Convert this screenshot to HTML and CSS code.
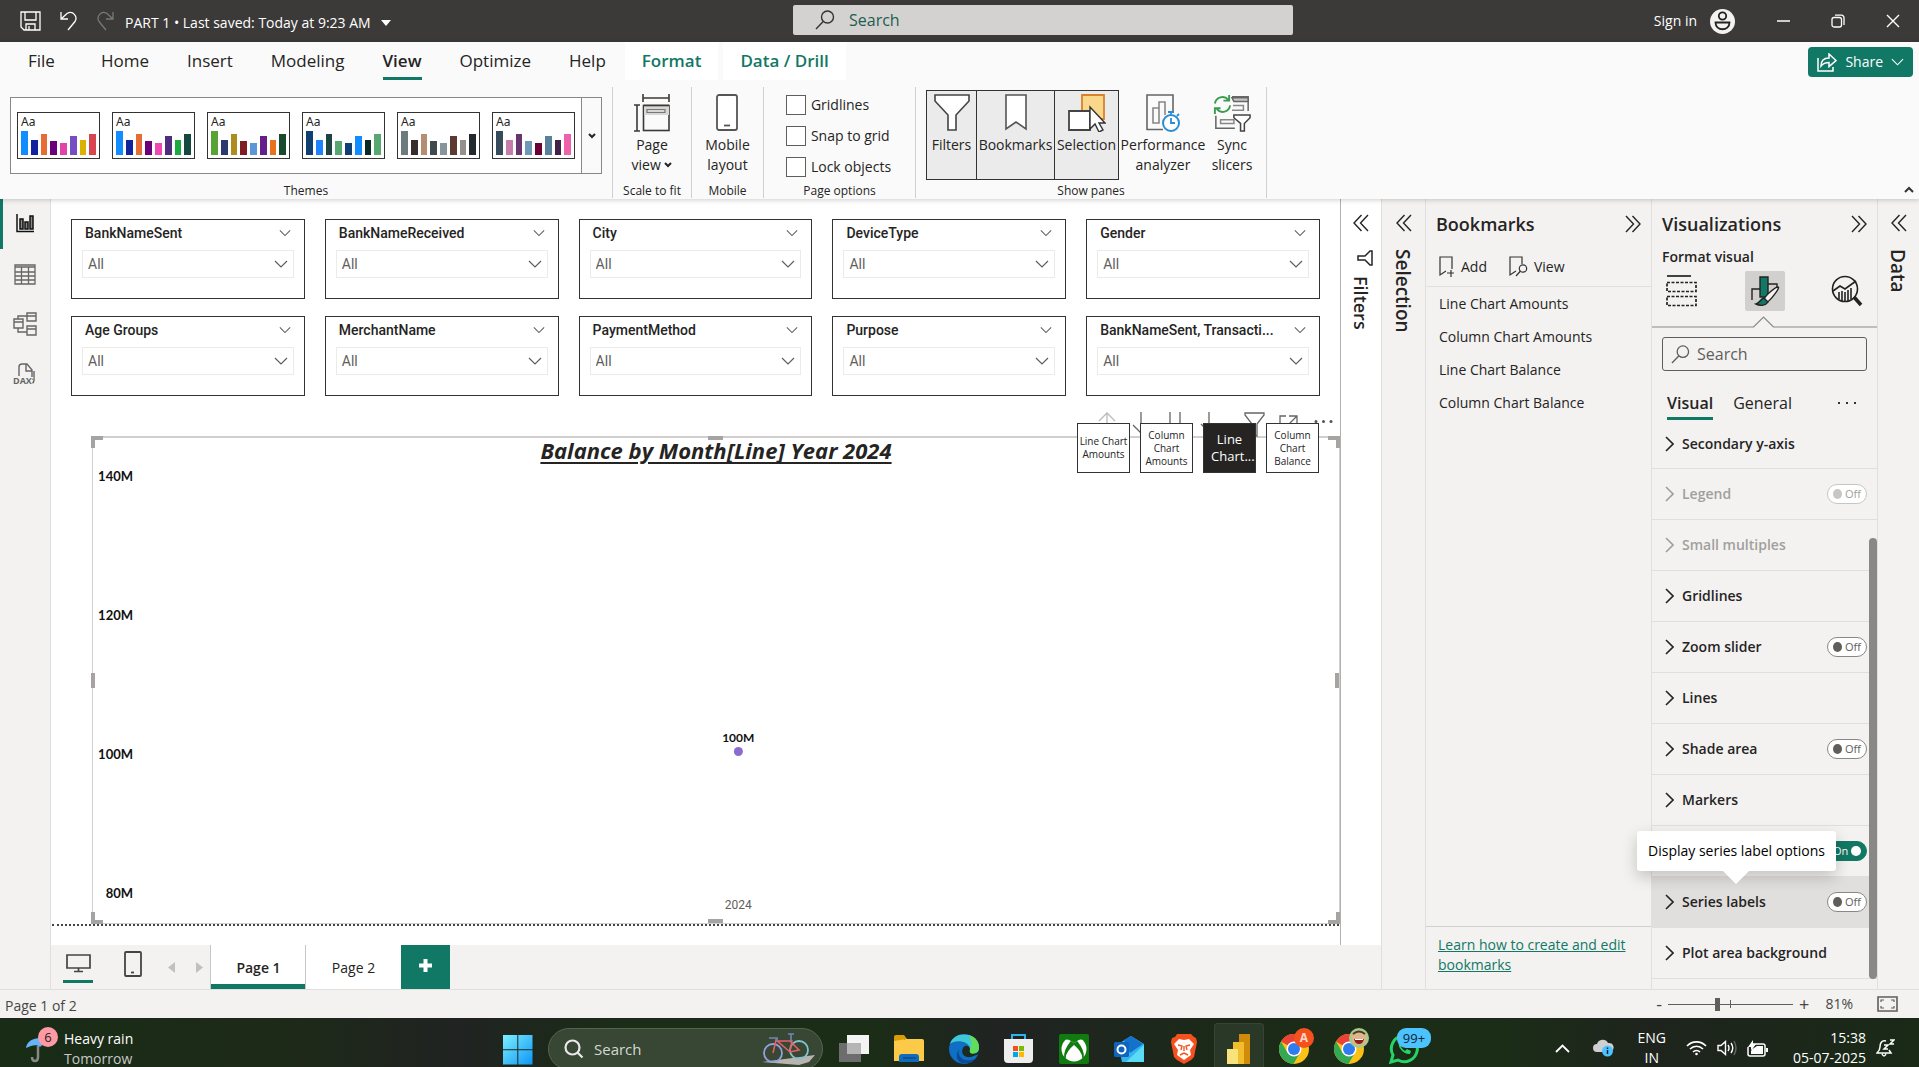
FILE: index.html
```html
<!DOCTYPE html>
<html lang="en">
<head>
<meta charset="utf-8">
<title>PART 1 - Power BI Desktop</title>
<link rel="stylesheet" href="styles.css">
</head>
<body>
<svg class="defs" width="0" height="0" aria-hidden="true">
  <symbol id="chev-down" viewBox="0 0 14 8"><path d="M1 1l6 6 6-6" fill="none" stroke="currentColor" stroke-width="1.2"/></symbol>
  <symbol id="chev-bold" viewBox="0 0 8 6"><path d="M1 1l3 3 3-3" fill="none" stroke="currentColor" stroke-width="2"/></symbol>
  <symbol id="chev-right" viewBox="0 0 9 16"><path d="M1 1l7 7-7 7" fill="none" stroke="currentColor" stroke-width="1.6"/></symbol>
  <symbol id="dbl-left" viewBox="0 0 16 18"><path d="M8.500 1L1 9l7.500 8M15 1L7.500 9l7.500 8" fill="none" stroke="currentColor" stroke-width="1.400"/></symbol>
  <symbol id="dbl-right" viewBox="0 0 16 18"><path d="M1 1l7.500 8L1 17M7.500 1L15 9l-7.500 8" fill="none" stroke="currentColor" stroke-width="1.400"/></symbol>
  <symbol id="lens" viewBox="0 0 20 20"><circle cx="12.500" cy="7" r="6" fill="none" stroke="currentColor" stroke-width="1.400"/><path d="M8.200 11.500L1 19" stroke="currentColor" stroke-width="1.400"/></symbol>
  <symbol id="chrome" viewBox="0 0 30 30"><circle cx="15" cy="15" r="15" fill="#fbc116"/><path d="M15 15L2 7.500A15 15 0 0 1 28 7.500H15z" fill="#ea4335"/><path d="M2 7.500A15 15 0 0 0 14.500 30L21 18.500 8.500 18.800z" fill="#34a853"/><circle cx="15" cy="15" r="7.500" fill="#fff"/><circle cx="15" cy="15" r="6" fill="#2f7bf0"/></symbol>
</svg>

<header class="titlebar">
  <div class="quick">
    <button class="icon-btn" aria-label="Save"><svg width="21" height="20" viewBox="0 0 21 20" fill="none" stroke="#fff" stroke-width="1.300"><path d="M1 1h19v18H4l-3-3zM5 1v8h11V1M6 19v-6h9v6M9 15v4"/></svg></button>
    <button class="icon-btn" aria-label="Undo"><svg width="19" height="20" viewBox="0 0 19 20" fill="none" stroke="#fff" stroke-width="1.300"><path d="M2 1v7h7M2 8l6-5.500c6-3.500 11 3 8 8L9 19"/></svg></button>
    <button class="icon-btn" aria-label="Redo"><svg width="19" height="20" viewBox="0 0 19 20" fill="none" stroke="#7a7876" stroke-width="1.300"><path d="M17 1v7h-7M17 8l-6-5.500c-6-3.500-11 3-8 8l7 8.500"/></svg></button>
    <button class="doc-name">PART 1 • Last saved: Today at 9:23 AM <span class="tri"></span></button>
  </div>
  <label class="top-search"><svg width="20" height="20"><use href="#lens"/></svg><input type="text" placeholder="Search" aria-label="Search"></label>
  <div class="window">
    <button class="sign">Sign in
      <svg width="25" height="25" viewBox="0 0 25 25"><circle cx="12.500" cy="12.500" r="12.500" fill="#f3f2f1"/><circle cx="12.500" cy="7" r="3.700" fill="none" stroke="#222" stroke-width="1.800"/><path d="M5.500 13.500h14c0 9-14 9-14 0z" fill="none" stroke="#222" stroke-width="1.800"/></svg></button>
    <button class="icon-btn" aria-label="Minimize"><svg width="14" height="14"><path d="M1 7h13" stroke="#fff" stroke-width="1.500"/></svg></button>
    <button class="icon-btn" aria-label="Restore"><svg width="14" height="14" fill="none" stroke="#fff" stroke-width="1.300"><rect x="1" y="3.500" width="9.500" height="9.500" rx="2"/><path d="M4 1.200h6.500a2.500 2.500 0 0 1 2.500 2.500V11"/></svg></button>
    <button class="icon-btn" aria-label="Close"><svg width="14" height="14" stroke="#fff" stroke-width="1.400"><path d="M1 1l12 12M13 1L1 13"/></svg></button>
  </div>
</header>

<section class="ribbon">
  <nav class="tabs">
    <a href="#file">File</a><a href="#home">Home</a><a href="#insert">Insert</a><a href="#modeling">Modeling</a><a href="#view" class="on">View</a><a href="#optimize">Optimize</a><a href="#help">Help</a>
    <a href="#format" class="ctx">Format</a><a href="#data" class="ctx">Data / Drill</a>
    <button class="share"><svg width="20" height="19" viewBox="0 0 20 19" fill="none" stroke="#fff" stroke-width="1.500"><path d="M1 5v13h15v-4M4 13c0-6 4-8 8-8V1l7 6.500-7 6v-4c-4 0-6 1-8 3.500z"/></svg>Share<svg width="13" height="8"><use href="#chev-down"/></svg></button>
  </nav>
  <div class="groups">
    <div class="group g-themes">
      <div class="gallery">
        <button class="theme"><b>Aa</b><span class="bars"><i style="background:#118dff"></i><i style="background:#12239e"></i><i style="background:#e66c37"></i><i style="background:#6b007b"></i><i style="background:#e044a7"></i><i style="background:#744ec2"></i><i style="background:#d9b300"></i><i style="background:#d64550"></i></span></button>
        <button class="theme"><b>Aa</b><span class="bars"><i style="background:#118dff"></i><i style="background:#12239e"></i><i style="background:#e66c37"></i><i style="background:#6b007b"></i><i style="background:#f047b3"></i><i style="background:#4e2d7c"></i><i style="background:#1aab40"></i><i style="background:#15483f"></i></span></button>
        <button class="theme"><b>Aa</b><span class="bars"><i style="background:#57a335"></i><i style="background:#2b3a6d"></i><i style="background:#ad8d1e"></i><i style="background:#7f1d24"></i><i style="background:#5b97d5"></i><i style="background:#63208a"></i><i style="background:#e8731c"></i><i style="background:#184a2c"></i></span></button>
        <button class="theme"><b>Aa</b><span class="bars"><i style="background:#103f73"></i><i style="background:#1f83ff"></i><i style="background:#1c4440"></i><i style="background:#57a773"></i><i style="background:#103f73"></i><i style="background:#118dff"></i><i style="background:#0a2a26"></i><i style="background:#57a773"></i></span></button>
        <button class="theme"><b>Aa</b><span class="bars"><i style="background:#6b7b7e"></i><i style="background:#372c2c"></i><i style="background:#b48d73"></i><i style="background:#3f4a4d"></i><i style="background:#84959b"></i><i style="background:#5c3a32"></i><i style="background:#96908c"></i><i style="background:#24292c"></i></span></button>
        <button class="theme"><b>Aa</b><span class="bars"><i style="background:#364b5c"></i><i style="background:#c67da9"></i><i style="background:#68356e"></i><i style="background:#7099b8"></i><i style="background:#6b0033"></i><i style="background:#58809b"></i><i style="background:#41204a"></i><i style="background:#ed62ab"></i></span></button>
        <button class="more" aria-label="More themes"><svg width="8" height="6"><use href="#chev-bold"/></svg></button>
      </div>
      <p>Themes</p>
    </div>
    <div class="group g-scale">
      <button class="big"><svg width="36" height="38" viewBox="0 0 36 38" fill="none" stroke="#3b3a39" stroke-width="1.600"><path d="M9 4h26M9 0v8M35 0v8M3 11v26M0 11h6M0 37h6"/><rect x="9.500" y="11.500" width="25.500" height="25"/><path d="M10 12h25v9H10z" fill="#d8d7d6" stroke="none"/><path d="M13 15.500h18v3H13z" stroke="#777" stroke-width="1.200"/><path d="M9.500 11.500H35"/></svg><span>Page<br>view <svg width="8" height="6"><use href="#chev-bold"/></svg></span></button>
      <p>Scale to fit</p>
    </div>
    <div class="group g-mobile">
      <button class="big"><svg width="22" height="38" viewBox="0 0 22 38" fill="#fff" stroke="#555" stroke-width="1.800"><rect x="1" y="1" width="20" height="35" rx="2"/><path d="M8 31.500h6"/></svg><span>Mobile<br>layout</span></button>
      <p>Mobile</p>
    </div>
    <div class="group g-options">
      <div class="checks">
        <label><input type="checkbox">Gridlines</label>
        <label><input type="checkbox">Snap to grid</label>
        <label><input type="checkbox">Lock objects</label>
      </div>
      <p>Page options</p>
    </div>
    <div class="group g-panes">
      <div class="row">
        <button class="big on b-filters"><svg width="36" height="38" viewBox="0 0 36 38" fill="#fff" stroke="#444" stroke-width="1.600"><path d="M1 1h34v6L22 21v15h-8V21L1 7z"/></svg><span>Filters</span></button>
        <button class="big on b-book"><svg width="22" height="38" viewBox="0 0 22 38" fill="#fff" stroke="#555" stroke-width="1.600"><path d="M1 1h20v34l-10-7-10 7z"/></svg><span>Bookmarks</span></button>
        <button class="big on b-sel"><svg width="38" height="38" viewBox="0 0 38 38"><path d="M14 1h22v24H14z" fill="#f9d88b" stroke="#d9822b" stroke-width="1.800"/><path d="M1 17h21v19H1z" fill="#fff" stroke="#444" stroke-width="1.800"/><path d="M22 13v22l5-5 4 8 4-2-4-7h6z" fill="#fff" stroke="#333" stroke-width="1.400"/></svg><span>Selection</span></button>
        <button class="big b-perf"><svg width="34" height="38" viewBox="0 0 34 38" fill="none" stroke="#666" stroke-width="1.600"><path d="M17 35.500H1V1h26v17"/><path d="M7 29V14h6v15zM13 14V8h6v13" stroke="#888"/><circle cx="25" cy="29" r="8" fill="#fff" stroke="#2a8dd4" stroke-width="2"/><path d="M25 20v-3M22 18h6M25 24v5h4M31 22l2-2" stroke="#2a8dd4" stroke-width="1.800"/></svg><span>Performance<br>analyzer</span></button>
        <button class="big b-sync"><svg width="38" height="38" viewBox="0 0 40 40" fill="none" stroke="#666" stroke-width="1.600"><path d="M20 3h17v15M3 23v13h20" /><path d="M20 4h17v4H22z" fill="#c8c6c4"/><path d="M21 12h11v5H20M8 27h14v4H8z" stroke="#888"/><path d="M22 22h17v3l-6 6v8h-4v-8l-7-6z" fill="#fff" stroke="#444"/><g stroke="#3a9a50" stroke-width="2"><path d="M2 10a8 8 0 0 1 14-4M17 1v6h-6M18 12a8 8 0 0 1-14 4M2 21v-6h6"/></g></svg><span>Sync<br>slicers</span></button>
      </div>
      <p>Show panes</p>
    </div>
    <button class="collapse" aria-label="Collapse ribbon"><svg width="10" height="7"><path d="M1 6l4-4 4 4" fill="none" stroke="#333" stroke-width="2"/></svg></button>
  </div>
</section>

<main class="work">
  <nav class="rail">
    <button class="on" aria-label="Report view"><svg width="18" height="19" viewBox="0 0 18 19" fill="none" stroke="#111" stroke-width="1.500"><path d="M1 0v17.500h17"/><path d="M4 5h3v10H4zM9 8h3v7H9zM14 2h3v13h-3z" fill="#888"/></svg></button>
    <button aria-label="Table view"><svg width="22" height="21" viewBox="0 0 22 21" fill="none" stroke="#666" stroke-width="1.300"><path d="M1 1h20v19H1zM1 3h20M1 8h20M1 12h20M1 16h20M7.500 3v17M14.500 3v17"/></svg></button>
    <button aria-label="Model view"><svg width="24" height="24" viewBox="0 0 24 24" fill="none" stroke="#666" stroke-width="1.400"><path d="M14 1h9v8h-9zM14 4h9M14 14h9v9h-9zM14 17h9M1 7h9v9H1zM1 10h9M5 7V4h9M5 16v4h9"/></svg></button>
    <button aria-label="DAX query view"><svg width="24" height="23" viewBox="0 0 24 23" fill="none" stroke="#666" stroke-width="1.400"><path d="M6 13V4q0-3 3-3h5l5 6v10M13 1v7h6M21 8v9q0 3-3 4"/><text x="0" y="21" class="dax">DAX</text></svg></button>
  </nav>

  <section class="center">
    <div class="stage">
      <div class="canvas">
        <div class="slicers">
          <div class="slicer"><h3>BankNameSent<svg width="12" height="8"><use href="#chev-down"/></svg></h3><label><select aria-label="BankNameSent"><option>All</option></select><svg width="14" height="8"><use href="#chev-down"/></svg></label></div>
          <div class="slicer"><h3>BankNameReceived<svg width="12" height="8"><use href="#chev-down"/></svg></h3><label><select aria-label="BankNameReceived"><option>All</option></select><svg width="14" height="8"><use href="#chev-down"/></svg></label></div>
          <div class="slicer"><h3>City<svg width="12" height="8"><use href="#chev-down"/></svg></h3><label><select aria-label="City"><option>All</option></select><svg width="14" height="8"><use href="#chev-down"/></svg></label></div>
          <div class="slicer"><h3>DeviceType<svg width="12" height="8"><use href="#chev-down"/></svg></h3><label><select aria-label="DeviceType"><option>All</option></select><svg width="14" height="8"><use href="#chev-down"/></svg></label></div>
          <div class="slicer"><h3>Gender<svg width="12" height="8"><use href="#chev-down"/></svg></h3><label><select aria-label="Gender"><option>All</option></select><svg width="14" height="8"><use href="#chev-down"/></svg></label></div>
          <div class="slicer"><h3>Age Groups<svg width="12" height="8"><use href="#chev-down"/></svg></h3><label><select aria-label="Age Groups"><option>All</option></select><svg width="14" height="8"><use href="#chev-down"/></svg></label></div>
          <div class="slicer"><h3>MerchantName<svg width="12" height="8"><use href="#chev-down"/></svg></h3><label><select aria-label="MerchantName"><option>All</option></select><svg width="14" height="8"><use href="#chev-down"/></svg></label></div>
          <div class="slicer"><h3>PaymentMethod<svg width="12" height="8"><use href="#chev-down"/></svg></h3><label><select aria-label="PaymentMethod"><option>All</option></select><svg width="14" height="8"><use href="#chev-down"/></svg></label></div>
          <div class="slicer"><h3>Purpose<svg width="12" height="8"><use href="#chev-down"/></svg></h3><label><select aria-label="Purpose"><option>All</option></select><svg width="14" height="8"><use href="#chev-down"/></svg></label></div>
          <div class="slicer"><h3>BankNameSent, Transacti...<svg width="12" height="8"><use href="#chev-down"/></svg></h3><label><select aria-label="BankNameSent, Transaction"><option>All</option></select><svg width="14" height="8"><use href="#chev-down"/></svg></label></div>
        </div>
        <div class="chart">
          <h2>Balance by Month[Line] Year 2024</h2>
          <div class="plot">
            <div class="yaxis"><span>140M</span><span>120M</span><span>100M</span><span>80M</span></div>
            <div class="area"><span class="point">100M</span><span class="xlabel">2024</span></div>
          </div>
          <i class="h tl"></i><i class="h tr"></i><i class="h bl"></i><i class="h br"></i><i class="h t"></i><i class="h b"></i><i class="h l"></i><i class="h r"></i>
          <svg class="tools" width="232" height="26" viewBox="0 0 232 26" fill="none" stroke="#666" stroke-width="1.300"><path d="M7 9l8-8 8 8M15 1v16" stroke="#bbb"/><path d="M49 0v20M41 13l8 8 8-8M78 0v18M88 0v18M117 0v18M109 12l8 8 8-8"/><path d="M153 1h19v2l-7 9v12l-5-3v-9l-7-9z"/><path d="M194 4h-6v16h16v-6M197 4h8v8M205 4l-9 9"/></svg>
          <svg class="dots" width="19" height="3" fill="#555"><circle cx="2" cy="1.500" r="1.500"/><circle cx="9.500" cy="1.500" r="1.500"/><circle cx="17" cy="1.500" r="1.500"/></svg>
          <div class="navs"><button>Line Chart Amounts</button><button>Column Chart Amounts</button><button class="on">Line<br>&nbsp;&nbsp;Chart...</button><button>Column Chart Balance</button></div>
        </div>
      </div>
      <aside class="side filters"><button class="icon-btn" aria-label="Expand filters"><svg width="16" height="18"><use href="#dbl-left"/></svg></button><svg class="fi" width="16" height="16" viewBox="0 0 16 16" fill="none" stroke="#252423" stroke-width="1.500"><path d="M15 1v14h-2L8 10H1V6h7l5-5z"/></svg><h2>Filters</h2></aside>
    </div>
    <div class="pages">
      <button class="dev on" aria-label="Desktop layout"><svg width="25" height="19" viewBox="0 0 25 19" fill="none" stroke="#444" stroke-width="1.700"><path d="M1 1h23v13H1zM12.500 14v3M8 17.500h9"/></svg></button>
      <button class="dev" aria-label="Mobile layout"><svg width="18" height="26" viewBox="0 0 18 26" fill="none" stroke="#444" stroke-width="1.800"><rect x="1" y="1" width="16" height="24" rx="1"/><path d="M7 21.500h3"/></svg></button>
      <button class="arrow" aria-label="Previous page"><svg width="7" height="11"><path d="M7 0v11L0 5.500z" fill="#c2c0be"/></svg></button>
      <button class="arrow" aria-label="Next page"><svg width="7" height="11"><path d="M0 0v11l7-5.500z" fill="#c2c0be"/></svg></button>
      <button class="page on">Page 1</button><button class="page">Page 2</button>
      <button class="add" aria-label="New page"><svg width="15" height="15"><path d="M7.500 1v13M1 7.500h13" stroke="#fff" stroke-width="4"/></svg></button>
    </div>
  </section>

  <aside class="side selection"><button class="icon-btn" aria-label="Expand selection"><svg width="16" height="18"><use href="#dbl-left"/></svg></button><h2>Selection</h2></aside>

  <aside class="pane bookmarks">
    <header><h2>Bookmarks</h2><button class="icon-btn" aria-label="Collapse bookmarks"><svg width="16" height="18"><use href="#dbl-right"/></svg></button></header>
    <div class="acts">
      <button><svg width="16" height="21" viewBox="0 0 16 21" fill="none" stroke="#333" stroke-width="1.200"><path d="M13 13V1H1v18l6-4M8 17h7M12 14v7"/></svg>Add</button>
      <button><svg width="19" height="21" viewBox="0 0 19 21" fill="none" stroke="#333" stroke-width="1.200"><path d="M13 8V1H1v18l6-4"/><circle cx="14" cy="12.500" r="3.700"/><path d="M11.500 15L7 20"/></svg>View</button>
    </div>
    <ul><li>Line Chart Amounts</li><li>Column Chart Amounts</li><li>Line Chart Balance</li><li>Column Chart Balance</li></ul>
    <footer><a href="#learn">Learn how to create and edit bookmarks</a></footer>
  </aside>

  <aside class="pane vis">
    <header><h2>Visualizations</h2><button class="icon-btn" aria-label="Collapse visualizations"><svg width="16" height="18"><use href="#dbl-right"/></svg></button></header>
    <h4>Format visual</h4>
    <div class="modes">
      <button aria-label="Build visual"><svg width="32" height="32" viewBox="0 0 32 32" fill="none" stroke="#222" stroke-width="1.700"><path d="M1 1h24"/><path d="M1 7.500h29v9H1zM1 21.500h29v9H1z" stroke-dasharray="3 1.500"/></svg></button>
      <button class="on" aria-label="Format visual"><svg width="30" height="30" viewBox="0 0 30 30" fill="none" stroke="#222" stroke-width="1.400"><path d="M2 24V13h9M18 8h9v6"/><path d="M10 1h8v20h-8z" fill="#117865"/><path d="M28 11c3 0-8 14-11 15l-3-3c2-4 11-12 14-12z" fill="#f3f2f1"/><path d="M14 22l4 4c-3 4-8 4-12 2 4-1 4-5 8-6z" fill="#117865"/></svg></button>
      <button aria-label="Analytics"><svg width="32" height="32" viewBox="0 0 32 32" fill="none" stroke="#222" stroke-width="1.600"><circle cx="14" cy="14" r="12.500"/><path d="M2 16l7-5 5 3 11-8M8 24v-7M11 26V16M14 26v-9M17 26V15M20 24V13" /><path d="M23 22l7 8" stroke-width="3.500"/></svg></button>
    </div>
    <svg class="caret" viewBox="0 0 226 12" preserveAspectRatio="none" fill="none" stroke="#8a8886" stroke-width="1.200"><path d="M0 11h102l10-10 10 10h104"/></svg>
    <label class="search"><svg width="19" height="19"><use href="#lens"/></svg><input type="text" placeholder="Search" aria-label="Search format options"></label>
    <div class="subtabs"><button class="on">Visual</button><button>General</button><button class="ell" aria-label="More options"><svg width="20" height="4"><path d="M1 1h2v2H1zM9 1h2v2H9zM17 1h2v2h-2z" fill="#333"/></svg></button></div>
    <div class="cards">
      <div class="card first"><svg width="9" height="16"><use href="#chev-right"/></svg>Secondary y-axis</div>
      <div class="card dim"><svg width="9" height="16"><use href="#chev-right"/></svg>Legend<label class="tog"><input type="checkbox" disabled>Off</label></div>
      <div class="card dim"><svg width="9" height="16"><use href="#chev-right"/></svg>Small multiples</div>
      <div class="card"><svg width="9" height="16"><use href="#chev-right"/></svg>Gridlines</div>
      <div class="card"><svg width="9" height="16"><use href="#chev-right"/></svg>Zoom slider<label class="tog"><input type="checkbox">Off</label></div>
      <div class="card"><svg width="9" height="16"><use href="#chev-right"/></svg>Lines</div>
      <div class="card"><svg width="9" height="16"><use href="#chev-right"/></svg>Shade area<label class="tog"><input type="checkbox">Off</label></div>
      <div class="card"><svg width="9" height="16"><use href="#chev-right"/></svg>Markers</div>
      <div class="card"><label class="tog yes"><input type="checkbox" checked>On</label></div>
      <div class="card hover"><svg width="9" height="16"><use href="#chev-right"/></svg>Series labels<label class="tog"><input type="checkbox">Off</label><div class="tip" role="tooltip">Display series label options</div></div>
      <div class="card"><svg width="9" height="16"><use href="#chev-right"/></svg>Plot area background</div>
      <div class="thumb"></div>
    </div>
  </aside>

  <aside class="side data"><button class="icon-btn" aria-label="Expand data"><svg width="16" height="18"><use href="#dbl-left"/></svg></button><h2>Data</h2></aside>
</main>

<footer class="status">
  <span>Page 1 of 2</span>
  <div class="zoom"><button>-</button><span class="track"><input type="range" min="0" max="100" value="39" aria-label="Zoom"></span><button>+</button><output>81%</output>
  <button aria-label="Fit to page"><svg width="21" height="16" viewBox="0 0 21 16" fill="none" stroke="#605e5c" stroke-width="1.600"><path d="M1 1h19v14H1z"/><path d="M4 6V4h3M14 4h3v2M4 10v2h3M14 12h3v-2" stroke-width="1.200"/></svg></button></div>
</footer>

<footer class="taskbar">
  <div class="weather">
    <svg width="36" height="40" viewBox="0 0 36 40"><path d="M1 22C2 10 24 8 28 20c-2-2-4-2-5 1-3-3-5-3-8 0-3-3-8-2-14 1z" fill="#66b4f5"/><path d="M13 20v11q0 4-3 4t-3-4" fill="none" stroke="#8a8886" stroke-width="2.500"/><circle cx="23" cy="11" r="10" fill="#ff99a4"/><text x="23" y="16" text-anchor="middle" class="t6">6</text></svg>
    <span>Heavy rain<br><em>Tomorrow</em></span>
  </div>
  <div class="apps">
    <button aria-label="Start"><svg width="30" height="30" viewBox="0 0 30 30"><defs><linearGradient id="win" x1="0" y1="0" x2="1" y2="1"><stop offset="0" stop-color="#7bf0ff"/><stop offset="1" stop-color="#0e95f5"/></linearGradient></defs><path d="M0 0h14.300v14.300H0zM15.300 0H29.500v14.300H15.300zM0 15.300h14.300v14.300H0zM15.300 15.300h14.200v14.300H15.300z" fill="url(#win)"/></svg></button>
    <label class="task-search"><svg width="20" height="20" fill="none" stroke="#e8e8e8" stroke-width="2.200"><circle cx="8.500" cy="8.500" r="7"/><path d="M13.500 13.500l5 5"/></svg><input type="text" placeholder="Search" aria-label="Taskbar search"><svg width="54" height="32" viewBox="0 0 54 32" fill="none"><path d="M0 29l53-7-6 7-10 3z" fill="#b9b4b0"/><circle cx="11" cy="20" r="9" stroke="#8fa2e0" stroke-width="1.800"/><circle cx="37" cy="17" r="9" stroke="#7fc6cc" stroke-width="1.800"/><path d="M11 20l3-13 14 12 9-2-9-9H14M28 19l2-12" stroke="#e9606b" stroke-width="1.500"/><path d="M7 5h8v3M29 8V1M26 1h6" stroke="#7287b5" stroke-width="1.600"/></svg></label>
    <button aria-label="Task view"><svg width="30" height="30" viewBox="0 0 30 30"><path d="M8 1h22v19H8z" fill="#f4f4f4"/><path d="M0 9h22v19H0z" fill="#6d6d6d"/><path d="M8 9h14v11H8z" fill="#b5b5b5"/></svg></button>
    <button aria-label="File Explorer"><svg width="30" height="30" viewBox="0 0 30 30"><path d="M0 3q0-2 2-2h8l3 4h-3v6H0z" fill="#d99b06"/><path d="M0 7l12-2h16q2 0 2 2v20H0z" fill="#fcca48"/><path d="M5 28v-5q0-3 3-3h14q3 0 3 3v5z" fill="#0f6cbd"/><path d="M9 24h13" stroke="#0a4c8a" stroke-width="1.500"/></svg></button>
    <button aria-label="Edge"><svg width="30" height="30" viewBox="0 0 30 30"><circle cx="15" cy="15" r="15" fill="#0f6fc5"/><path d="M1 10C5-4 29-2 30 13c0 5-4 8-8 7-3-1-2-3-1-5 0-8-15-10-20-5z" fill="#3fc8d4"/><path d="M20 1c7 2 10 7 10 12 0 5-4 8-8 7-3-1-2-3-1-5 2-4 2-9-1-14z" fill="#62dc5c"/><path d="M10 15c-2 8 5 14 16 10-8 9-24 4-16-10z" fill="#0b4a94"/><path d="M14 14c-3 6 2 10 8 9l8-3v-3c-2 3-11 5-9-2 0-3-5-5-7-1z" fill="#1d2a20"/></svg></button>
    <button aria-label="Store"><svg width="30" height="30" viewBox="0 0 30 30"><path d="M8 5V1h13v4" fill="none" stroke="#2bb4f2" stroke-width="2"/><path d="M0 5h29v20q0 4-4 4H4q-4 0-4-4z" fill="#eee"/><path d="M9 12h5v5H9z" fill="#f25022"/><path d="M15 12h5v5h-5z" fill="#7fba00"/><path d="M9 18h5v5H9z" fill="#00a4ef"/><path d="M15 18h5v5h-5z" fill="#ffb900"/></svg></button>
    <button aria-label="Xbox"><svg width="30" height="30" viewBox="0 0 30 30"><rect width="30" height="30" rx="2" fill="#107c10"/><circle cx="15" cy="15" r="12.500" fill="#fff"/><path d="M7 5c3-1 6 2 8 3 2-1 5-4 8-3-3-2-5-3-8-3S10 3 7 5zM15 10C9 15 6 20 6 24c-1-5 2-11 6-16zM15 10c6 5 9 10 9 14 1-5-2-11-6-16z" fill="#107c10" stroke="#107c10" stroke-width="1.500"/></svg></button>
    <button aria-label="Outlook"><svg width="30" height="30" viewBox="0 0 30 30"><path d="M4 10l13-8 13 8v18H8z" fill="#36b4ee"/><path d="M10 6l7-4 12 8-13 9z" fill="#1272cc"/><path d="M30 11v17H12z" fill="#5bdcf5"/><rect y="8" width="15" height="15" rx="1.500" fill="#0f64c0"/><circle cx="7.500" cy="15.500" r="4" fill="none" stroke="#fff" stroke-width="2"/></svg></button>
    <button aria-label="Brave"><svg width="30" height="30" viewBox="0 0 30 30"><path d="M8 0h14l3 3 2 1 1 4-3 15-3 3-7 4-7-4-3-3L2 8l1-4 3-1z" fill="#f6501e"/><path d="M10 5l5 1 5-1 5 5-4 6 1 5-7 5-7-5 1-5-4-6z" fill="#fff"/><path d="M9 11l4 1-1 4M21 11l-4 1 1 4M11 21l4-2 4 2M15 12v5" fill="none" stroke="#f6501e" stroke-width="1.400"/></svg></button>
    <button class="on" aria-label="Power BI"><svg width="24" height="30" viewBox="0 0 24 30"><path d="M12 0h11v30H12z" fill="#d18b0a"/><path d="M6 8h11v22H6z" fill="#f1bd2c"/><path d="M0 15h11v15H0z" fill="#f8e27c"/></svg></button>
    <button aria-label="Chrome"><svg width="30" height="30"><use href="#chrome"/></svg><b class="badge a">A</b></button>
    <button aria-label="Chrome, second profile"><svg width="30" height="30"><use href="#chrome"/></svg><b class="badge f"><svg width="20" height="20" viewBox="0 0 20 20"><circle cx="10" cy="10" r="10" fill="#a9c98a"/><path d="M3 8q7-8 14 0v6q-7 6-14 0z" fill="#e2b48a"/><path d="M4 6q6-5 12 0" fill="none" stroke="#4b3a2a" stroke-width="2"/><path d="M5 11h10q-1 5-5 5t-5-5z" fill="#8c1f1a"/><path d="M6 11h8v1H6z" fill="#fff"/></svg></b></button>
    <button aria-label="WhatsApp"><svg width="30" height="30" viewBox="0 0 30 30" fill="none" stroke="#25d366" stroke-width="3"><path d="M2 28l2-7a13 13 0 1 1 5 5z"/><path d="M10 8c-2 5 5 13 11 12l1-3-4-2-2 2c-2-1-3-3-4-4l1-3z" fill="#25d366" stroke="none"/></svg><b class="badge n">99+</b></button>
  </div>
  <div class="tray">
    <svg width="15" height="9" fill="none" stroke="#fff" stroke-width="1.800"><path d="M1 8l6.500-6.500L14 8"/></svg>
    <svg class="cloud" width="21" height="18" viewBox="0 0 21 18"><path d="M4 13a4 4 0 0 1 0-8 6 6 0 0 1 11-1 4 4 0 0 1 2 9z" fill="#cfcfcf"/><circle cx="14.500" cy="12" r="5.500" fill="#4cc2ff"/><path d="M14.500 11v4M14.500 8.500V10" stroke="#123" stroke-width="1.500"/></svg>
    <span class="lang">ENG<br>IN</span>
    <svg width="21" height="16" fill="none" stroke="#fff" stroke-width="1.600"><path d="M1 6a13 13 0 0 1 19 0M4 9a9 9 0 0 1 13 0M7 12a5 5 0 0 1 7 0"/><circle cx="10.500" cy="14" r="1.300" fill="#fff" stroke="none"/></svg>
    <svg width="20" height="16" fill="none" stroke="#fff" stroke-width="1.400"><path d="M1 5.500h3l4.500-4v13l-4.500-4H1zM11 5q2 3 0 6M14 3q3.500 5 0 10"/><path d="M17 1q4 7 0 14" stroke="#666"/></svg>
    <svg width="21" height="17" viewBox="0 0 21 17"><path d="M5 4h11q2 0 2 2v8q0 2-2 2H3q-2 0-2-2V7" fill="none" stroke="#fff" stroke-width="1.500"/><path d="M10 6h6v8H4v-4zM19 8h2v4h-2zM6 0L1 7h3v4l5-7H6z" fill="#fff"/></svg>
    <span class="clock">15:38<br>05-07-2025</span>
    <svg width="19" height="19" viewBox="0 0 19 19" fill="none" stroke="#fff" stroke-width="1.500"><path d="M10 2C5 1 4 5 4 8c0 3-1 4-3 6h14l-2-3M6 15q2 4 4 0M8 6h4l-4 4h4M14 1h4l-4 4h4"/></svg>
  </div>
</footer>
</body>
</html>
```
FILE: styles.css
```css
*{box-sizing:border-box}
html,body{margin:0;height:100%}
body{display:flex;flex-direction:column;min-height:100vh;overflow:hidden;font:14px/20px "Open Sans","Noto Sans",sans-serif;color:#252423;background:#f3f2f1}
h2,h3,h4,p,ul{margin:0;padding:0}
ul{list-style:none}
button,input,select{font:inherit;color:inherit;background:none;border:0;padding:0;margin:0}
svg{flex:none;display:block}
.defs{position:absolute}
.icon-btn{display:flex;align-items:center;justify-content:center}

/* title bar */
.titlebar{display:grid;grid-template-columns:793px 500px 1fr;align-items:center;height:42px;flex:none;background:#3b3a38;color:#fff}
.quick{display:flex;align-items:center;gap:18px;padding-left:20px}
.doc-name{display:flex;align-items:center;gap:10px;padding-top:3px;margin-left:-8px}
.tri{border:5px solid transparent;border-top:6px solid #fff;border-bottom:0}
.top-search{display:flex;align-items:center;gap:14px;height:30px;margin-bottom:2px;padding-left:22px;background:#d3d2d0;border-radius:2px;color:#333}
.top-search input{flex:1;font-size:16px}
.top-search input::placeholder{color:#1f5c4f;opacity:1}
.window{display:flex;align-items:center;justify-content:flex-end;gap:41px;padding-right:19px}
.sign{display:flex;align-items:center;gap:13px}

/* ribbon */
.ribbon{flex:none;height:157px;background:#fafafa;box-shadow:0 1px 5px #0003;position:relative;z-index:2}
.tabs{display:flex;height:38px;padding-left:9px;font-size:17px}
.tabs a{display:flex;align-items:center;color:#252423;text-decoration:none;padding:0 19px}
.tabs a:first-child{margin-right:8px}
.tabs .on{font-weight:600;position:relative}
.tabs .on::after{content:"";position:absolute;left:19px;right:19px;bottom:0;height:3px;background:#117865}
.tabs .ctx{background:#fff;color:#117865;font-weight:600;padding:0 17px;margin-right:5px}
.share{display:flex;align-items:center;gap:8px;height:30px;margin:5px 6px 0 auto;padding:0 9px;background:#117865;color:#fff;border-radius:4px;font-size:14px}
.groups{display:flex;height:111px;margin-top:7px}
.group{display:flex;flex-direction:column;justify-content:space-between;align-items:center;border-right:1px solid #d2d0ce}
.group p{font-size:12px;line-height:15px}
.g-themes{width:613px;padding:10px 0 0 0}
.g-scale{width:79px}.g-mobile{width:72px}.g-options{width:152px}.g-panes{width:351px}
.gallery{display:flex;align-items:center;gap:12px;width:592px;height:77px;border:1px solid #8a8886;background:#fff;padding-left:6px}
.theme{display:flex;flex-direction:column;justify-content:space-between;width:83px;height:47px;border:1px solid #333;padding:1px 3px 3px;font-size:12px;line-height:16px;text-align:left}
.theme b{font-weight:400;font-family:"Noto Sans",sans-serif}
.bars{display:flex;align-items:flex-end;gap:3px;height:24px}
.bars i{flex:1;height:15px}
.bars i:nth-child(1){height:24px}.bars i:nth-child(3),.bars i:nth-child(8){height:21px}
.bars i:nth-child(4){height:14px}.bars i:nth-child(5){height:12px}.bars i:nth-child(6){height:19px}
.more{display:flex;align-items:center;justify-content:center;width:20px;height:75px;margin-left:auto;border-left:1px solid #8a8886;background:#fafafa}
.gallery .theme:nth-child(6){margin-right:-6px}
.big{display:flex;flex-direction:column;align-items:center;gap:3px;height:90px;margin-top:3px;padding-top:3px;border:1px solid transparent;white-space:nowrap}
.big span svg{display:inline-block;vertical-align:2px}
.big.on{background:#ebebeb;border-color:#333;margin-right:-1px}
.checks{display:flex;flex-direction:column;gap:11px;padding:8px 2px 0 0}
.checks label{display:flex;align-items:center;gap:5px;height:20px}
.checks input{appearance:none;width:20px;height:20px;border:1px solid #605e5c;background:#fff}
.row{display:flex}
.b-filters{width:51px}.b-book{width:79px}.b-sel{width:65px}.b-perf{width:90px}.b-sync{width:48px}
.collapse{margin:auto 5px 5px auto}

/* work area */
.work{display:flex;flex:1;min-height:0}
.rail{width:51px;flex:none;border-right:1px solid #e1dfdd}
.rail button{display:flex;align-items:center;justify-content:center;width:100%;height:50px;padding-right:3px;border-left:3px solid transparent}
.rail .on{border-color:#117865;padding-bottom:2px}
.dax{font:700 9px "Open Sans",sans-serif;fill:#666;stroke:#f3f2f1;stroke-width:2px;paint-order:stroke}
.center{flex:1;display:flex;flex-direction:column;min-width:0}
.stage{flex:1;display:flex;min-height:0;background:#fff}
.canvas{flex:1;display:flex;flex-direction:column;min-width:0;padding:20px 0 21px}
.slicers{display:grid;grid-template-columns:repeat(5,1fr);gap:17px 20px;padding:0 20px}
.slicer{height:80px;border:1px solid #333;padding:3px 10px 0;min-width:0}
.slicer h3{display:flex;align-items:center;justify-content:space-between;height:20px;padding:0 3px;font:500 14px/20px Roboto,sans-serif;white-space:nowrap}
.slicer h3 svg,.slicer label svg{color:#605e5c}
.slicer label{display:flex;align-items:center;height:28px;margin-top:7px;border:1px solid #edebe9;padding:0 5px}
.slicer select{flex:1;appearance:none;font:14px Roboto,sans-serif;color:#605e5c}
.chart{flex:1;display:flex;flex-direction:column;position:relative;margin:40px 0 0 41px;border:1px solid #d2d0ce;border-top-width:2px}
.chart::after{content:"";position:absolute;left:-41px;right:0;bottom:-3px;border-bottom:2px dotted #444}
.chart h2{align-self:center;font:italic 700 22px/24px "Open Sans",sans-serif;text-decoration:underline;text-underline-offset:3px}
.plot{flex:1;display:flex;padding:6px 0 0 0}
.yaxis{display:flex;flex-direction:column;justify-content:space-between;width:40px;padding-bottom:22px;text-align:right;font:700 13px/16px Lato,sans-serif;color:#111}
.area{flex:1;position:relative;margin-right:64px}
.point{position:absolute;left:53%;top:60%;transform:translate(-50%,-10px);font:700 12px/14px Lato,sans-serif;color:#111}
.point::after{content:"";display:block;width:9px;height:9px;border-radius:50%;background:#8b6bd0;margin:2px auto}
.xlabel{position:absolute;left:53%;bottom:10px;transform:translateX(-50%);font:12px/16px Roboto,sans-serif;color:#605e5c}
.h{position:absolute;border:0 solid #a6a4a2}
.tl,.tr,.bl,.br{width:12px;height:12px}
.tl{top:-2px;left:-2px;border-width:4px 0 0 4px}.tr{top:-2px;right:-1px;border-width:4px 4px 0 0}
.bl{bottom:-1px;left:-2px;border-width:0 0 4px 4px}.br{bottom:-1px;right:-1px;border-width:0 4px 4px 0}
.t,.b{left:50%;width:15px;margin-left:-8px;border-top-width:4px}.t{top:-2px}.b{bottom:0}
.l,.r{top:50%;height:15px;margin-top:-8px;border-left-width:4px}.l{left:-2px}.r{right:0}
.tools{position:absolute;right:15px;top:-26px}
.dots{position:absolute;right:6px;top:-18px}
.navs{position:absolute;top:-15px;right:20px;display:flex;gap:10px}
.navs button{width:53px;height:50px;border:1px solid #333;background:#fff;font:10px/13px "Open Sans",sans-serif;overflow:hidden}
.navs .on{background:#252423;color:#fff;font-size:13px;line-height:17px;white-space:nowrap}

/* collapsed side panes */
.side{display:flex;flex-direction:column;align-items:center;width:44px;flex:none;padding-top:15px;border-left:1px solid #e1dfdd}
.side h2{writing-mode:vertical-rl;font-size:19px;line-height:24px;font-weight:600;margin:17px 2px 0 0}
.filters{width:41px;border-color:#b3b0ad}
.fi{margin:18px 0 0 8px}
.side.filters h2{margin:10px 0 0;font-size:18px}
.data{width:42px}

/* page tabs */
.pages{display:flex;flex:none;height:44px;background:#f3f2f1}
.dev{display:flex;justify-content:center;width:30px;margin-left:12px;padding-top:9px}
.dev+.dev{margin:0 9px 0 25px;padding-top:6px}
.dev.on{box-shadow:inset 0 -6px #f3f2f1,inset 0 -9px #117865}
.arrow{width:28px;display:flex;align-items:center;justify-content:center}
.arrow+.arrow{margin-right:-3px}
.page{width:96px;background:#fff;border-left:1px solid #c8c6c4;padding-top:1px;margin-right:-1px}
.page.on{font-weight:600;box-shadow:inset 0 -5px #117865}
.add{display:flex;align-items:center;justify-content:center;width:49px;margin-left:1px;background:#117865;padding-bottom:4px}

/* open panes */
.pane{display:flex;flex-direction:column;width:226px;flex:none;border-left:1px solid #e1dfdd}
.pane header{display:flex;align-items:center;justify-content:space-between;height:50px;padding:0 10px 0 10px}
.pane h2{font-size:18px;font-weight:600}
.acts{display:flex;gap:22px;height:38px;padding:0 0 0 13px;border-bottom:1px solid #e1dfdd}
.acts button{display:flex;align-items:center;gap:6px;padding-bottom:2px}
.bookmarks ul{flex:1}
.bookmarks li{height:33px;line-height:33px;padding-left:13px}
.bookmarks footer{height:63px;border-top:1px solid #d2d0ce;padding:8px 12px}
.bookmarks a{color:#117865}
.vis h4{font-size:14px;font-weight:600;line-height:20px;padding:0 10px;margin-top:-2px}
.modes{display:flex;justify-content:space-between;height:44px;padding:4px 14px}
.modes button{display:flex;align-items:center;justify-content:center;height:40px}
.modes .on{width:40px;background:#d2d0ce;border-radius:2px}
.caret{width:100%;height:12px;margin-top:5px}
.search{display:flex;align-items:center;gap:7px;height:34px;margin:9px 10px 0 10px;padding-left:8px;border:1px solid #605e5c;border-radius:3px;color:#605e5c;flex:none}
.search input{flex:1;min-width:0;font-size:16px}
.search input::placeholder{color:#605e5c;opacity:1}
.subtabs{display:flex;flex:none;gap:20px;height:50px;padding:17px 20px 0 15px;font-size:16px}
.subtabs button{height:32px;padding-bottom:2px}
.subtabs .on{font-weight:600;border-bottom:3px solid #117865;padding-bottom:0}
.subtabs .ell{margin-left:auto}
.cards{flex:1;position:relative;min-height:0}
.card{display:flex;align-items:center;gap:8px;height:51px;padding:0 10px 0 13px;border-bottom:1px solid #e1dfdd;font-weight:600;position:relative}
.card.first{height:48px;padding-bottom:2px}
.dim{color:#a19f9d}
.hover{background:#e1dfdd}
.tog{display:flex;align-items:center;gap:3px;margin-left:auto;width:40px;height:20px;padding:0 5px;border:1px solid #8a8886;border-radius:10px;background:#fff;font-size:11px;font-weight:400;color:#605e5c}
.tog input{appearance:none;width:10px;height:10px;border-radius:50%;background:#605e5c}
.dim .tog{border-color:#c8c6c4;color:#a19f9d}.dim .tog input{background:#c8c6c4}
.tog.yes{flex-direction:row-reverse;background:#117865;border-color:#117865;color:#fff}
.tog.yes input{background:#fff}
.thumb{position:absolute;right:0;top:117px;width:8px;bottom:10px;border-radius:4px;background:#8a8886}
.tip{position:absolute;z-index:3;left:-15px;top:-46px;width:199px;height:40px;line-height:40px;text-align:center;background:#fff;color:#000;font-weight:400;border-radius:3px;box-shadow:0 6px 16px #0003;white-space:nowrap}
.tip::after{content:"";position:absolute;left:86px;top:40px;border:13px solid transparent;border-top-color:#fff;border-bottom:0}

/* status bar */
.status{display:flex;align-items:center;justify-content:space-between;flex:none;height:30px;padding:0 21px 0 5px;border-top:1px solid #e1dfdd;border-bottom:1px solid #222;color:#484644}
.status>span{padding-top:4px}
.zoom{display:flex;align-items:center;gap:6px}
.zoom button{font-size:18px}
.zoom output{margin:0 18px 0 10px}
.track{display:flex;position:relative}
.track::after{content:"";position:absolute;left:62px;top:6px;width:1px;height:8px;background:#605e5c}
.track input{appearance:none;width:125px;height:20px;background:linear-gradient(#605e5c,#605e5c) center/100% 1px no-repeat}
.track input::-webkit-slider-thumb{appearance:none;width:5px;height:13px;background:#605e5c}

/* taskbar */
.taskbar{display:flex;align-items:flex-start;flex:none;height:48px;background:linear-gradient(90deg,#182c16,#1d2a17 14%,#202322 24%,#1b2c17 32%,#1b2c17 46%,#202322 52%,#1b2a18 64%,#1b2d17 78%,#1e241d 86%,#1a2a17);color:#fff;overflow:hidden}
.weather{display:flex;gap:3px;width:503px;padding:7px 0 0 25px}
.weather span{padding-top:3px;line-height:20px}
.weather em{font-style:normal;color:#c8c8c8}
.t6{font:13px "Open Sans",sans-serif;fill:#222}
.apps{display:flex;align-items:flex-start}
.apps button{position:relative;width:55px;height:60px;padding-top:15px;display:flex;justify-content:center}
.apps button:first-child{width:30px;padding-top:16px;margin-right:15px}
.apps button.on{width:50px;margin:4px 2px 0 3px;padding-top:10px;background:#fff1;border:1px solid #fff1;border-radius:4px}
.task-search{display:flex;align-items:center;gap:10px;width:275px;height:42px;margin:9px 3px 0 0;padding:0 6px 0 15px;border:1px solid #54654f;border-radius:21px;background:#384634}
.task-search input{flex:1;min-width:0;font-size:15px}
.task-search input::placeholder{color:#d5d8d3;opacity:1}
.badge{position:absolute;left:28px;top:9px;width:20px;height:20px;border-radius:50%;font-size:12px;line-height:20px;background:#f4511e;color:#ffd9c8}
.badge.f{background:none}
.badge.n{left:21px;width:34px;border-radius:9px;background:#4cc2ff;color:#123;font-size:13px;font-weight:400}
.tray{display:flex;align-items:center;gap:10px;margin-left:auto;padding:9px 24px 0 0;text-align:center}
.cloud{margin:0 14px 0 13px}
.lang{margin-right:10px}
.clock{width:88px;text-align:right}
```
